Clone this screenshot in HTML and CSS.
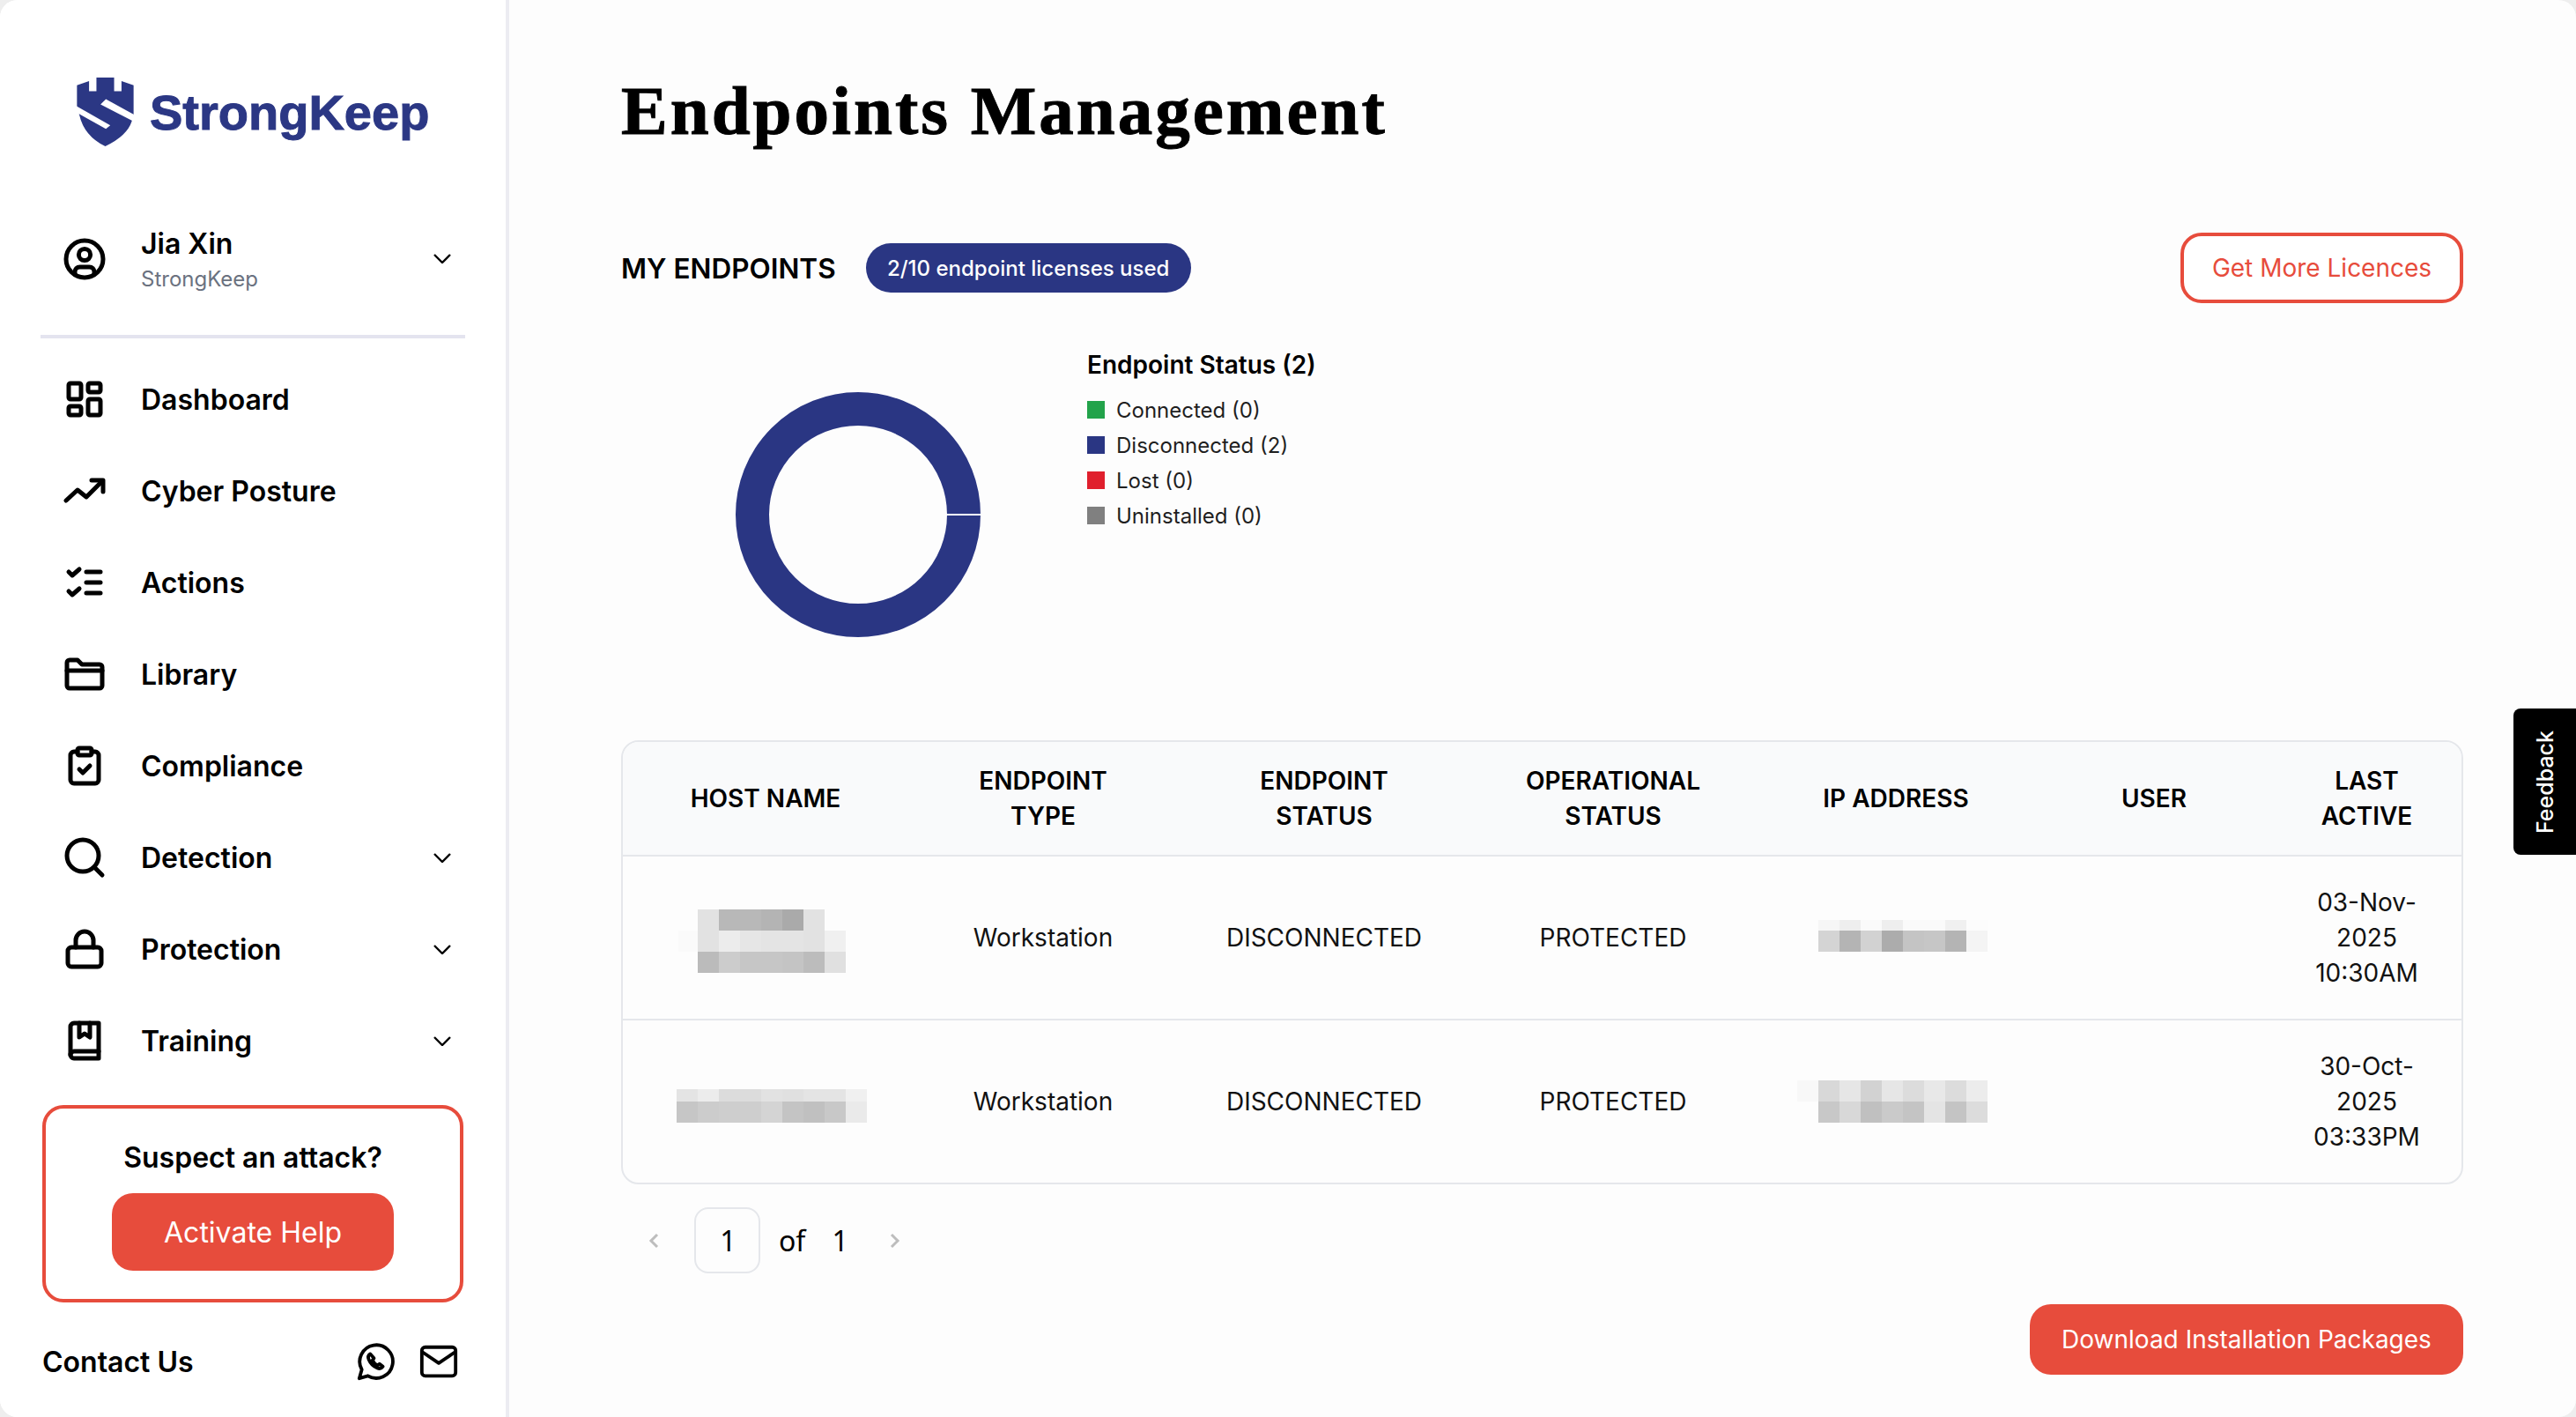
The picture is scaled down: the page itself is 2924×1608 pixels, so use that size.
FILE: index.html
```html
<!DOCTYPE html>
<html>
<head>
    <title>Endpoints Management</title>
    <link rel="stylesheet" href="styles.css">
</head>
<body>
<div class="shell">
    <aside class="sidebar">
        <div class="logo">
            <svg class="logo-mark" viewBox="52 24 192 233">
                <path class="shield" d="M52 50L93 36V70H118V24H178V70H203V36L244 50V148L238 172Q222 222 148 257Q76 222 60 150L52 122Z"/>
                <path class="shield-cut" d="M46 118L165 186L150 198L46 140Z"/>
                <path class="shield-cut" d="M150 97L250 152L250 176L132 115Z"/>
            </svg>
            <span class="logo-text">StrongKeep</span>
        </div>

        <div class="user-row">
            <svg class="icon" viewBox="0 0 24 24">
                <circle cx="12" cy="12" r="10.5"/>
                <circle cx="12" cy="9.5" r="3.3"/>
                <path d="M6.5 20v-.7a2.8 2.8 0 0 1 2.8-2.8h5.4a2.8 2.8 0 0 1 2.8 2.8v.7"/>
            </svg>
            <div class="user-text">
                <div class="user-name">Jia Xin</div>
                <div class="user-org">StrongKeep</div>
            </div>
            <svg class="chevron" viewBox="0 0 20 11"><path d="M1 1l9 9 9-9"/></svg>
        </div>

        <nav class="nav">
            <a class="nav-item">
                <svg class="icon" viewBox="0 0 24 24">
                    <rect x="3" y="3" width="7" height="9" rx="1"/>
                    <rect x="14" y="3" width="7" height="5" rx="1"/>
                    <rect x="14" y="12" width="7" height="9" rx="1"/>
                    <rect x="3" y="16" width="7" height="5" rx="1"/>
                </svg>
                <span>Dashboard</span>
            </a>
            <a class="nav-item">
                <svg class="icon" viewBox="0 0 24 24">
                    <path d="M1.5 17.5L8 11.5l5 4 9-9"/>
                    <path d="M16 6h6.500v6.500"/>
                </svg>
                <span>Cyber Posture</span>
            </a>
            <a class="nav-item">
                <svg class="icon" viewBox="0 0 24 24">
                    <path d="M3 6l2 2 4-3.500"/>
                    <path d="M3 17l2 2 4-3.500"/>
                    <path d="M13 6h8M13 12h8M13 18h8"/>
                </svg>
                <span>Actions</span>
            </a>
            <a class="nav-item">
                <svg class="icon" viewBox="0 0 24 24">
                    <path d="M2 5.500A1.500 1.500 0 0 1 3.500 4H8l2.500 2.500h10A1.500 1.500 0 0 1 22 8v10.500a1.500 1.500 0 0 1-1.500 1.500h-17A1.500 1.500 0 0 1 2 18.500Z"/>
                    <path d="M2 10h20"/>
                </svg>
                <span>Library</span>
            </a>
            <a class="nav-item">
                <svg class="icon" viewBox="0 0 24 24">
                    <rect x="8" y="2" width="8" height="4" rx="1"/>
                    <path d="M16 4h2a2 2 0 0 1 2 2v14a2 2 0 0 1-2 2H6a2 2 0 0 1-2-2V6a2 2 0 0 1 2-2h2"/>
                    <path d="M9 14l2 2 4-4"/>
                </svg>
                <span>Compliance</span>
            </a>
            <a class="nav-item">
                <svg class="icon" viewBox="0 0 24 24">
                    <circle cx="11" cy="11" r="9"/>
                    <path d="M17.500 17.500L22 22"/>
                </svg>
                <span>Detection</span>
                <svg class="chevron" viewBox="0 0 20 11"><path d="M1 1l9 9 9-9"/></svg>
            </a>
            <a class="nav-item">
                <svg class="icon" viewBox="0 0 24 24">
                    <rect x="2.500" y="11" width="19" height="11" rx="2"/>
                    <path d="M7 11V7a5 5 0 0 1 10 0v4"/>
                </svg>
                <span>Protection</span>
                <svg class="chevron" viewBox="0 0 20 11"><path d="M1 1l9 9 9-9"/></svg>
            </a>
            <a class="nav-item">
                <svg class="icon" viewBox="0 0 24 24">
                    <path d="M20 2H6a2 2 0 0 0-2 2v16a2 2 0 0 0 2 2h14Z"/>
                    <path d="M4 20a2 2 0 0 1 2-2h14"/>
                    <path d="M9 2v8l3-2 3 2V2"/>
                </svg>
                <span>Training</span>
                <svg class="chevron" viewBox="0 0 20 11"><path d="M1 1l9 9 9-9"/></svg>
            </a>
        </nav>

        <div class="attack-box">
            <div class="attack-title">Suspect an attack?</div>
            <button class="btn-red btn-help">Activate Help</button>
        </div>

        <div class="contact-row">
            <span class="contact-label">Contact Us</span>
            <svg class="contact-icon" viewBox="0 0 24 24">
                <path d="M2.500 22l1.500-5.200a9.800 9.800 0 1 1 3.600 3.700Z"/>
                <path d="M9 7.500c-1.200.8-1.500 2-.8 3.500a9 9 0 0 0 4.800 4.800c1.500.7 2.700.4 3.500-.8l-2-1.600-1.200.9a6 6 0 0 1-3-3l.9-1.200Z"/>
            </svg>
            <svg class="contact-icon" viewBox="0 0 24 24">
                <rect x="2" y="3.500" width="20" height="17" rx="2"/>
                <path d="M2.500 6.500L12 13l9.500-6.500"/>
            </svg>
        </div>
    </aside>

    <main class="main">
        <h1>Endpoints Management</h1>

        <div class="toolbar">
            <h2>MY ENDPOINTS</h2>
            <span class="pill">2/10 endpoint licenses used</span>
            <button class="btn-outline">Get More Licences</button>
        </div>

        <section class="chart">
            <svg class="donut" viewBox="0 0 278 278">
                <circle cx="139" cy="139" r="120"/>
                <rect x="238" y="138" width="40" height="2"/>
            </svg>
            <div class="legend">
                <div class="legend-title">Endpoint Status (2)</div>
                <div class="legend-item"><i class="swatch green"></i>Connected (0)</div>
                <div class="legend-item"><i class="swatch navy"></i>Disconnected (2)</div>
                <div class="legend-item"><i class="swatch red"></i>Lost (0)</div>
                <div class="legend-item"><i class="swatch grey"></i>Uninstalled (0)</div>
            </div>
        </section>

        <div class="table-wrap">
            <table>
                <colgroup>
                    <col class="col-host">
                    <col class="col-type">
                    <col class="col-status">
                    <col class="col-op">
                    <col class="col-ip">
                    <col class="col-user">
                    <col class="col-last">
                </colgroup>
                <thead>
                    <tr>
                        <th>HOST NAME</th>
                        <th>ENDPOINT<br>TYPE</th>
                        <th>ENDPOINT<br>STATUS</th>
                        <th>OPERATIONAL<br>STATUS</th>
                        <th>IP ADDRESS</th>
                        <th>USER</th>
                        <th>LAST<br>ACTIVE</th>
                    </tr>
                </thead>
                <tbody>
                    <tr>
                        <td class="masked">
                            <svg class="mosaic" viewBox="0 0 324 184">
                                <rect x="63" y="84" width="22" height="24" fill="#fafafa"/>
                                <rect x="85" y="60" width="24" height="24" fill="#e2e2e2"/><rect x="109" y="60" width="24" height="24" fill="#b8b8b8"/><rect x="133" y="60" width="24" height="24" fill="#b8b8b8"/><rect x="157" y="60" width="24" height="24" fill="#b4b4b4"/><rect x="181" y="60" width="24" height="24" fill="#aaaaaa"/><rect x="205" y="60" width="24" height="24" fill="#e2e2e2"/>
                                <rect x="85" y="84" width="24" height="24" fill="#e2e2e2"/><rect x="109" y="84" width="24" height="24" fill="#ececec"/><rect x="133" y="84" width="24" height="24" fill="#e6e6e6"/><rect x="157" y="84" width="24" height="24" fill="#e4e4e4"/><rect x="181" y="84" width="24" height="24" fill="#e4e4e4"/><rect x="205" y="84" width="24" height="24" fill="#e2e2e2"/><rect x="229" y="84" width="24" height="24" fill="#f0f0f0"/>
                                <rect x="85" y="108" width="24" height="24" fill="#bbbbbb"/><rect x="109" y="108" width="24" height="24" fill="#cccccc"/><rect x="133" y="108" width="24" height="24" fill="#c6c6c6"/><rect x="157" y="108" width="24" height="24" fill="#c6c6c6"/><rect x="181" y="108" width="24" height="24" fill="#c4c4c4"/><rect x="205" y="108" width="24" height="24" fill="#bcbcbc"/><rect x="229" y="108" width="24" height="24" fill="#e0e0e0"/>
                            </svg>
                        </td>
                        <td>Workstation</td>
                        <td>DISCONNECTED</td>
                        <td>PROTECTED</td>
                        <td class="masked">
                            <svg class="mosaic" viewBox="0 0 318 184">
                                <rect x="71" y="72" width="24" height="12" fill="#f6f6f6"/><rect x="95" y="72" width="24" height="12" fill="#eeeeee"/><rect x="119" y="72" width="24" height="12" fill="#fafafa"/><rect x="143" y="72" width="24" height="12" fill="#eeeeee"/><rect x="167" y="72" width="24" height="12" fill="#fafafa"/><rect x="191" y="72" width="24" height="12" fill="#fafafa"/><rect x="215" y="72" width="24" height="12" fill="#f0f0f0"/><rect x="239" y="72" width="24" height="12" fill="#fcfcfc"/>
                                <rect x="71" y="84" width="24" height="24" fill="#d4d4d4"/><rect x="95" y="84" width="24" height="24" fill="#b4b4b4"/><rect x="119" y="84" width="24" height="24" fill="#d2d2d2"/><rect x="143" y="84" width="24" height="24" fill="#acacac"/><rect x="167" y="84" width="24" height="24" fill="#c4c4c4"/><rect x="191" y="84" width="24" height="24" fill="#c6c6c6"/><rect x="215" y="84" width="24" height="24" fill="#b4b4b4"/><rect x="239" y="84" width="24" height="24" fill="#f4f4f4"/>
                            </svg>
                        </td>
                        <td></td>
                        <td>03-Nov-<br>2025<br>10:30AM</td>
                    </tr>
                    <tr>
                        <td class="masked">
                            <svg class="mosaic" viewBox="0 0 324 184">
                                <rect x="61" y="78" width="24" height="14" fill="#e4e4e4"/><rect x="85" y="78" width="24" height="14" fill="#ececec"/><rect x="109" y="78" width="24" height="14" fill="#dcdcdc"/><rect x="133" y="78" width="24" height="14" fill="#dcdcdc"/><rect x="157" y="78" width="24" height="14" fill="#e2e2e2"/><rect x="181" y="78" width="24" height="14" fill="#e0e0e0"/><rect x="205" y="78" width="24" height="14" fill="#e4e4e4"/><rect x="229" y="78" width="24" height="14" fill="#e4e4e4"/><rect x="253" y="78" width="24" height="14" fill="#f0f0f0"/>
                                <rect x="61" y="92" width="24" height="24" fill="#c6c6c6"/><rect x="85" y="92" width="24" height="24" fill="#cccccc"/><rect x="109" y="92" width="24" height="24" fill="#cecece"/><rect x="133" y="92" width="24" height="24" fill="#cecece"/><rect x="157" y="92" width="24" height="24" fill="#d4d4d4"/><rect x="181" y="92" width="24" height="24" fill="#c4c4c4"/><rect x="205" y="92" width="24" height="24" fill="#c0c0c0"/><rect x="229" y="92" width="24" height="24" fill="#c8c8c8"/><rect x="253" y="92" width="24" height="24" fill="#eaeaea"/>
                            </svg>
                        </td>
                        <td>Workstation</td>
                        <td>DISCONNECTED</td>
                        <td>PROTECTED</td>
                        <td class="masked">
                            <svg class="mosaic" viewBox="0 0 318 184">
                                <rect x="47" y="68" width="24" height="24" fill="#f8f8f8"/>
                                <rect x="71" y="68" width="24" height="24" fill="#d8d8d8"/><rect x="95" y="68" width="24" height="24" fill="#e6e6e6"/><rect x="119" y="68" width="24" height="24" fill="#d2d2d2"/><rect x="143" y="68" width="24" height="24" fill="#e6e6e6"/><rect x="167" y="68" width="24" height="24" fill="#dcdcdc"/><rect x="191" y="68" width="24" height="24" fill="#e8e8e8"/><rect x="215" y="68" width="24" height="24" fill="#dcdcdc"/><rect x="239" y="68" width="24" height="24" fill="#ececec"/>
                                <rect x="71" y="92" width="24" height="24" fill="#c8c8c8"/><rect x="95" y="92" width="24" height="24" fill="#d8d8d8"/><rect x="119" y="92" width="24" height="24" fill="#c0c0c0"/><rect x="143" y="92" width="24" height="24" fill="#cacaca"/><rect x="167" y="92" width="24" height="24" fill="#c4c4c4"/><rect x="191" y="92" width="24" height="24" fill="#e4e4e4"/><rect x="215" y="92" width="24" height="24" fill="#c4c4c4"/><rect x="239" y="92" width="24" height="24" fill="#dcdcdc"/>
                            </svg>
                        </td>
                        <td></td>
                        <td>30-Oct-<br>2025<br>03:33PM</td>
                    </tr>
                </tbody>
            </table>
        </div>

        <div class="pager">
            <svg class="pager-arrow" viewBox="0 0 12 18"><path d="M10 2L3 9l7 7"/></svg>
            <span class="pager-box">1</span>
            <span class="pager-of">of</span>
            <span class="pager-total">1</span>
            <svg class="pager-arrow" viewBox="0 0 12 18"><path d="M2 2l7 7-7 7"/></svg>
        </div>

        <div class="bottom-actions">
            <button class="btn-red btn-download">Download Installation Packages</button>
        </div>
    </main>

    <div class="feedback"><span>Feedback</span></div>
</div>
</body>
</html>
```

FILE: styles.css
```css
* {
    box-sizing: border-box;
}
html,
body {
    margin: 0;
    height: 100%;
    background-color: #eeeeee;
}
body {
    font-family: "Inter", "Liberation Sans", sans-serif;
    color: #000000;
    overflow: hidden;
}
button {
    font-family: inherit;
    cursor: pointer;
}
.shell {
    position: relative;
    display: flex;
    height: 1608px;
    border-radius: 20px;
    overflow: hidden;
    background-color: #fdfdfd;
}

/* sidebar */
.sidebar {
    width: 578px;
    flex-shrink: 0;
    padding: 88px 46px 0;
    background-color: #ffffff;
    border-right: 4px solid #ececf2;
}
.logo {
    display: flex;
    align-items: center;
    gap: 18px;
    padding-left: 41px;
    height: 78px;
}
.logo-mark {
    width: 65px;
    height: 78px;
}
.shield {
    fill: #2b3784;
}
.shield-cut {
    fill: #ffffff;
}
.logo-text {
    font-family: "Liberation Sans", sans-serif;
    font-size: 56px;
    font-weight: 700;
    color: #2b3784;
    -webkit-text-stroke: 1px #2b3784;
}
.icon {
    width: 48px;
    height: 48px;
    flex-shrink: 0;
    fill: none;
    stroke: #000000;
    stroke-width: 2.5;
    stroke-linecap: round;
    stroke-linejoin: round;
}
.chevron {
    width: 20px;
    height: 11px;
    margin-left: auto;
    flex-shrink: 0;
    fill: none;
    stroke: #000000;
    stroke-width: 2.4;
}
.user-row {
    display: flex;
    align-items: center;
    gap: 40px;
    height: 100px;
    margin-top: 78px;
    padding: 0 16px 0 26px;
}
.user-row .chevron {
    margin-bottom: 2px;
}
.user-text {
    padding-top: 2px;
}
.user-name {
    font-size: 32px;
    font-weight: 600;
    line-height: 44px;
}
.user-org {
    font-size: 24px;
    line-height: 36px;
    color: #6b7280;
}
.nav {
    margin-top: 36px;
    padding-top: 17px;
    border-top: 4px solid #e4e4ef;
}
.nav-item {
    display: flex;
    align-items: center;
    gap: 40px;
    height: 104px;
    padding: 0 16px 0 26px;
    font-size: 32px;
    font-weight: 600;
}
.attack-box {
    display: flex;
    flex-direction: column;
    align-items: center;
    height: 224px;
    margin: 21px 2px 0;
    padding-top: 33px;
    border: 4px solid #e74c3c;
    border-radius: 24px;
}
.attack-title {
    font-size: 32px;
    font-weight: 600;
    line-height: 46px;
}
.btn-red {
    border: none;
    color: #ffffff;
    background-color: #e74c3c;
    border-radius: 24px;
}
.btn-help {
    width: 320px;
    height: 88px;
    margin-top: 17px;
    font-size: 32px;
}
.contact-row {
    display: flex;
    align-items: center;
    height: 44px;
    margin-top: 45px;
    padding: 0 7px 0 2px;
}
.contact-label {
    margin-right: auto;
    font-size: 32px;
    font-weight: 600;
}
.contact-icon {
    width: 46px;
    height: 46px;
    margin-left: 26px;
    fill: none;
    stroke: #000000;
    stroke-width: 2;
    stroke-linejoin: round;
    stroke-linecap: round;
}

/* main */
.main {
    flex: 1;
    padding: 76px 128px 0 127px;
    min-width: 0;
}
h1 {
    margin: 0;
    font-family: "Liberation Serif", serif;
    font-size: 79px;
    font-weight: 700;
    line-height: 100px;
    letter-spacing: 3px;
    -webkit-text-stroke: 1px #000000;
}
.toolbar {
    display: flex;
    align-items: center;
    height: 80px;
    margin-top: 88px;
}
h2 {
    margin: 0;
    font-size: 31.500px;
    font-weight: 600;
}
.pill {
    display: flex;
    align-items: center;
    justify-content: center;
    width: 369px;
    height: 56px;
    margin-left: 34px;
    color: #ffffff;
    font-size: 24px;
    font-weight: 500;
    background-color: #2a3683;
    border-radius: 28px;
}
.btn-outline {
    width: 321px;
    height: 80px;
    margin-left: auto;
    font-size: 28px;
    color: #e74c3c;
    background-color: #ffffff;
    border: 4px solid #e74c3c;
    border-radius: 24px;
}
.chart {
    display: flex;
    align-items: flex-start;
    gap: 121px;
    height: 379px;
    padding: 50px 0 0 130px;
}
.donut {
    width: 278px;
    height: 278px;
    margin-top: 51px;
}
.donut circle {
    fill: none;
    stroke: #2a3683;
    stroke-width: 38;
}
.donut rect {
    fill: #ffffff;
}
.legend-title {
    font-size: 28px;
    font-weight: 600;
    line-height: 40px;
    margin-bottom: 11px;
}
.legend-item {
    display: flex;
    align-items: center;
    gap: 13px;
    height: 40px;
    font-size: 24px;
    color: #1f1f1f;
}
.swatch {
    width: 20px;
    height: 20px;
}
.green {
    background-color: #22a34a;
}
.navy {
    background-color: #2a3683;
}
.red {
    background-color: #e01f2d;
}
.grey {
    background-color: #808080;
}
.table-wrap {
    margin-top: 117px;
    border: 2px solid #e5e7eb;
    border-radius: 20px;
    overflow: hidden;
}
table {
    width: 100%;
    table-layout: fixed;
    border-collapse: separate;
    border-spacing: 0;
    font-size: 28px;
    line-height: 40px;
    text-align: center;
}
.col-host {
    width: 324px;
}
.col-type {
    width: 306px;
}
.col-status {
    width: 332px;
}
.col-op {
    width: 324px;
}
.col-ip {
    width: 318px;
}
.col-user {
    width: 268px;
}
th {
    height: 130px;
    padding: 0;
    font-weight: 600;
    background-color: #f9fafb;
    border-bottom: 2px solid #e5e7eb;
}
td {
    height: 186px;
    padding: 0;
    color: #111111;
    border-bottom: 2px solid #e5e7eb;
}
tbody tr:last-child td {
    border-bottom: none;
    height: 184px;
}
.masked {
    vertical-align: top;
}
.mosaic {
    display: block;
    width: 100%;
    height: 184px;
}
.pager {
    display: flex;
    align-items: center;
    height: 75px;
    margin-top: 26px;
    padding-left: 31px;
    font-family: "Noto Sans", sans-serif;
    font-size: 32px;
}
.pager-arrow {
    width: 12px;
    height: 18px;
    fill: none;
    stroke: #bdbdbd;
    stroke-width: 3;
}
.pager-box {
    display: flex;
    align-items: center;
    justify-content: center;
    width: 75px;
    height: 75px;
    margin: 0 21px 0 40px;
    padding-left: 2px;
    border: 2px solid #e5e7eb;
    border-radius: 16px;
}
.pager-total {
    margin: 0 47px 0 30px;
}
.bottom-actions {
    display: flex;
    justify-content: flex-end;
    margin-top: 35px;
}
.btn-download {
    width: 492px;
    height: 80px;
    font-size: 28px;
}
.feedback {
    position: absolute;
    top: 804px;
    right: 0;
    display: flex;
    align-items: center;
    justify-content: center;
    width: 71px;
    height: 166px;
    color: #ffffff;
    background-color: #000000;
    border-radius: 8px 0 0 8px;
}
.feedback span {
    writing-mode: vertical-rl;
    transform: rotate(180deg);
    font-size: 25px;
    font-weight: 500;
}
```
